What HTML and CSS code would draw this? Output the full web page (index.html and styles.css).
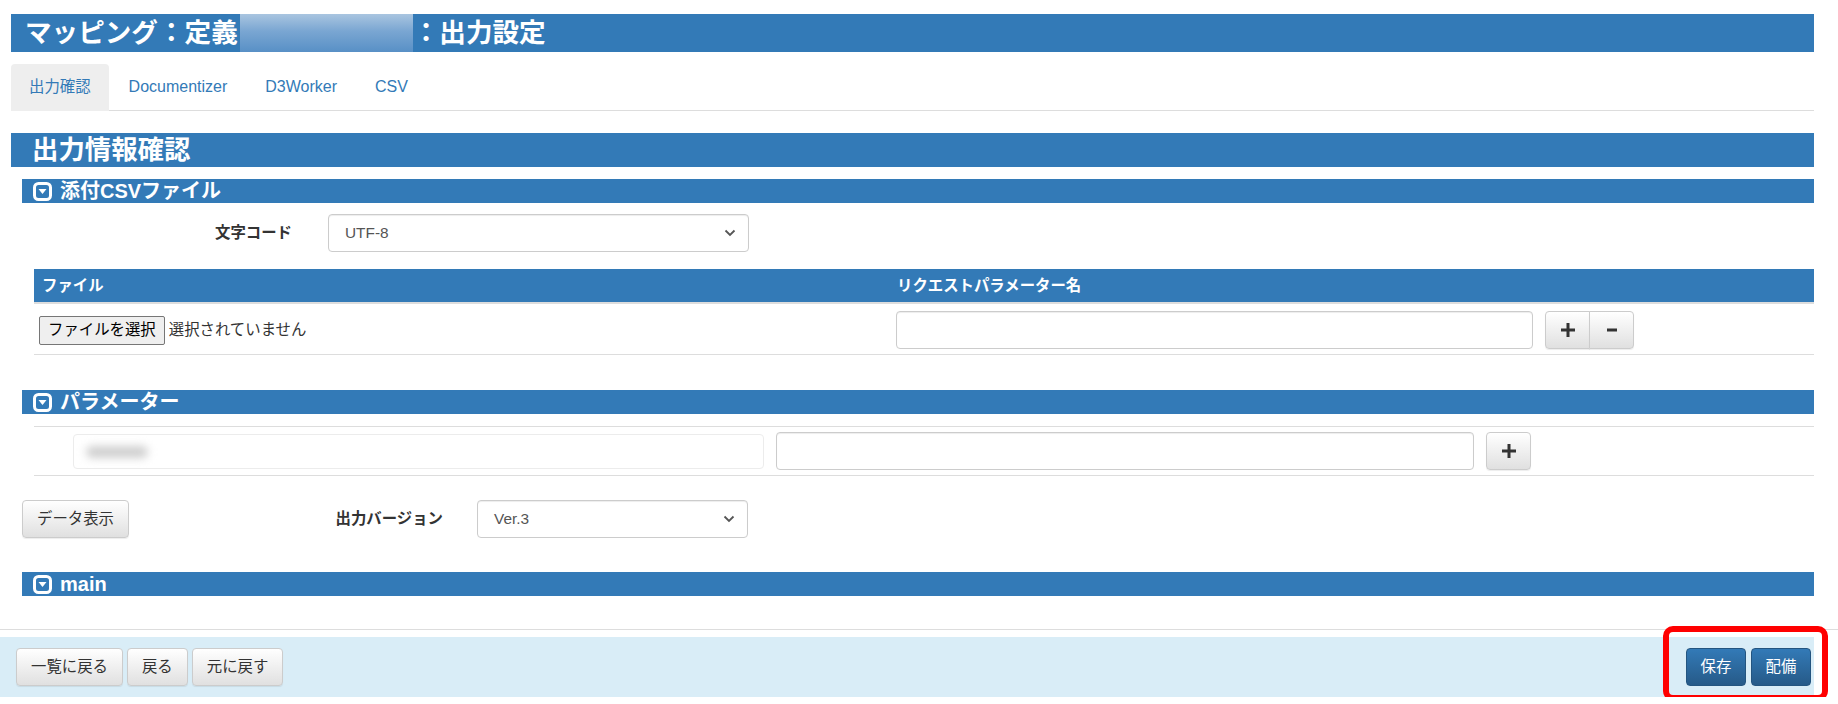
FILE: index.html
```html
<!DOCTYPE html>
<html lang="ja">

<head>
  <meta charset="UTF-8" />
  <title>マッピング：出力設定</title>
  <link rel="stylesheet" href="styles.css">
</head>

<body>
  <div class="page">
    <h1 class="title-bar">マッピング：定義<span class="masked"></span>：出力設定</h1>

    <ul class="nav-tabs">
      <li class="active"><a href="#">出力確認</a></li>
      <li><a href="#">Documentizer</a></li>
      <li><a href="#">D3Worker</a></li>
      <li><a href="#">CSV</a></li>
    </ul>

    <h2 class="section-bar">出力情報確認</h2>

    <div class="section-body">
      <h3 class="sub-bar">
        <svg class="toggle-icon" viewBox="0 0 19 19">
          <rect x="1.5" y="1.5" width="16" height="16" rx="4" fill="none" stroke="#fff" stroke-width="3" />
          <polygon points="5.5,7 13.5,7 9.5,12" fill="#fff" />
        </svg>
        添付CSVファイル
      </h3>

      <div class="form-row">
        <label class="form-label label-charset">文字コード</label>
        <div class="select-box select-charset">
          <span>UTF-8</span>
          <svg class="chevron" viewBox="0 0 12 8">
            <path d="M1.5 1.5 L6 6 L10.5 1.5" fill="none" stroke="#555" stroke-width="1.8" />
          </svg>
        </div>
      </div>

      <table class="grid-table">
        <thead>
          <tr>
            <th class="col-file">ファイル</th>
            <th>リクエストパラメーター名</th>
          </tr>
        </thead>
        <tbody>
          <tr>
            <td><button class="file-btn">ファイルを選択</button><span class="file-name">選択されていません</span></td>
            <td>
              <div class="param-cell">
                <input class="form-control input-request" type="text">
                <div class="btn-group">
                  <button class="btn btn-default btn-icon">
                    <svg viewBox="0 0 14 14"><path d="M5.5 0h3v5.5H14v3H8.5V14h-3V8.5H0v-3h5.5z" fill="#333" /></svg>
                  </button>
                  <button class="btn btn-default btn-icon">
                    <svg viewBox="0 0 14 14"><rect x="2" y="5.5" width="10" height="3" fill="#333" /></svg>
                  </button>
                </div>
              </div>
            </td>
          </tr>
        </tbody>
      </table>

      <h3 class="sub-bar sub-bar-param">
        <svg class="toggle-icon" viewBox="0 0 19 19">
          <rect x="1.5" y="1.5" width="16" height="16" rx="4" fill="none" stroke="#fff" stroke-width="3" />
          <polygon points="5.5,7 13.5,7 9.5,12" fill="#fff" />
        </svg>
        パラメーター
      </h3>

      <div class="param-row">
        <div class="readonly-box"><span class="masked-text"></span></div>
        <input class="form-control input-param" type="text">
        <button class="btn btn-default btn-icon">
          <svg viewBox="0 0 14 14"><path d="M5.5 0h3v5.5H14v3H8.5V14h-3V8.5H0v-3h5.5z" fill="#333" /></svg>
        </button>
      </div>

      <div class="form-row version-row">
        <button class="btn btn-default">データ表示</button>
        <label class="form-label label-version">出力バージョン</label>
        <div class="select-box select-version">
          <span>Ver.3</span>
          <svg class="chevron" viewBox="0 0 12 8">
            <path d="M1.5 1.5 L6 6 L10.5 1.5" fill="none" stroke="#555" stroke-width="1.8" />
          </svg>
        </div>
      </div>

      <h3 class="sub-bar sub-bar-main">
        <svg class="toggle-icon" viewBox="0 0 19 19">
          <rect x="1.5" y="1.5" width="16" height="16" rx="4" fill="none" stroke="#fff" stroke-width="3" />
          <polygon points="5.5,7 13.5,7 9.5,12" fill="#fff" />
        </svg>
        main
      </h3>
    </div>
  </div>

  <hr class="page-divider">

  <div class="action-bar">
    <div class="btn-row">
      <button class="btn btn-default">一覧に戻る</button>
      <button class="btn btn-default">戻る</button>
      <button class="btn btn-default">元に戻す</button>
    </div>
    <div class="btn-row btn-row-right">
      <button class="btn btn-primary">保存</button>
      <button class="btn btn-primary">配備</button>
      <span class="highlight"></span>
    </div>
  </div>
</body>

</html>
```

FILE: styles.css
```css
:root {
  --primary: #337ab7;
  --primary-dark: #265a88;
  --text: #333333;
  --border: #dddddd;
  --input-border: #cccccc;
  --info-bg: #d9edf7;
}

* {
  box-sizing: border-box;
}

body {
  margin: 0;
  font-family: "Liberation Sans", "Noto Sans CJK JP", sans-serif;
  font-size: 15.4px;
  line-height: 22px;
  color: var(--text);
  background: #ffffff;
}

.page {
  padding: 14px 24px 0 11px;
}

/* 見出し */
.title-bar {
  margin: 0;
  height: 38px;
  padding-left: 14px;
  background: var(--primary);
  color: #ffffff;
  font-size: 26.6px;
  font-weight: bold;
  line-height: 38px;
  white-space: nowrap;
}

.masked {
  display: inline-block;
  width: 173px;
  height: 38px;
  vertical-align: top;
  margin-left: 2px;
  background: linear-gradient(180deg, #a9c5e0 0%, #7aa6d2 45%, #5890c6 100%);
}

.nav-tabs {
  display: flex;
  list-style: none;
  margin: 12px 0 0;
  padding: 0;
  border-bottom: 1px solid var(--border);
}

.nav-tabs li {
  margin-right: 2px;
  margin-bottom: -1px;
}

.nav-tabs a {
  display: block;
  padding: 12px 18px;
  font-size: 16px;
  line-height: 22px;
  color: var(--primary);
  text-decoration: none;
  border-radius: 4px 4px 0 0;
}

.nav-tabs .active a {
  font-size: 15.4px;
  background: #eeeeee;
  border-bottom: 1px solid #eeeeee;
}

.section-bar {
  margin: 22px 0 0;
  height: 34px;
  padding-left: 21px;
  background: var(--primary);
  color: #ffffff;
  font-size: 26.4px;
  font-weight: bold;
  line-height: 34px;
}

.section-body {
  margin-left: 11px;
}

.sub-bar {
  display: flex;
  align-items: center;
  margin: 12px 0 0;
  height: 24px;
  padding-left: 11px;
  background: var(--primary);
  color: #ffffff;
  font-size: 20px;
  font-weight: bold;
  line-height: 24px;
}

.sub-bar-param {
  margin-top: 35px;
}

.sub-bar-main {
  margin-top: 34px;
}

.toggle-icon {
  width: 19px;
  height: 19px;
  margin-right: 8px;
}

/* フォーム */
.form-row {
  display: flex;
  align-items: center;
  margin-top: 11px;
}

.form-label {
  font-weight: bold;
  text-align: right;
}

.label-charset {
  width: 270px;
  margin-right: 36px;
}

.select-box {
  display: flex;
  align-items: center;
  justify-content: space-between;
  height: 38px;
  padding: 0 12px 0 16px;
  border: 1px solid var(--input-border);
  border-radius: 4px;
  background: #ffffff;
  color: #555555;
  box-shadow: inset 0 1px 1px rgba(0, 0, 0, 0.075);
}

.select-charset {
  width: 421px;
}

.select-version {
  width: 271px;
}

.chevron {
  width: 12px;
  height: 8px;
}

.version-row {
  margin-top: 24px;
}

.label-version {
  width: 314px;
  margin-right: 34px;
}

.form-control {
  height: 38px;
  padding: 6px 13px;
  border: 1px solid var(--input-border);
  border-radius: 4px;
  background: #ffffff;
  font: inherit;
  color: #555555;
  box-shadow: inset 0 1px 1px rgba(0, 0, 0, 0.075);
}

/* テーブル */
.grid-table {
  width: calc(100% - 12px);
  margin: 17px 0 0 12px;
  border-collapse: collapse;
}

.grid-table th {
  height: 34px;
  padding: 0 8px;
  background: var(--primary);
  color: #ffffff;
  text-align: left;
  font-weight: bold;
  border-bottom: 2px solid var(--border);
}

.grid-table .col-file {
  width: 855px;
}

.grid-table td {
  padding: 7px 5px 5px 5px;
  border-bottom: 1px solid var(--border);
  vertical-align: middle;
}

.grid-table td:last-child {
  padding-left: 7px;
}

.file-btn {
  height: 29px;
  padding: 0 8px;
  border: 1px solid #767676;
  border-radius: 2px;
  background: #efefef;
  font: inherit;
  color: #000000;
}

.file-name {
  margin-left: 4px;
}

.param-cell {
  display: flex;
  align-items: center;
}

.input-request {
  width: 637px;
  margin-right: 12px;
}

.btn-group {
  display: flex;
}

.btn-group .btn:first-child {
  border-radius: 4px 0 0 4px;
}

.btn-group .btn:last-child {
  margin-left: -1px;
  border-radius: 0 4px 4px 0;
}

/* パラメーター行 */
.param-row {
  display: flex;
  align-items: center;
  margin: 12px 0 0 12px;
  padding: 5px 0 5px 39px;
  border-top: 1px solid var(--border);
  border-bottom: 1px solid var(--border);
}

.readonly-box {
  width: 691px;
  height: 35px;
  padding: 11px 12px;
  border: 1px solid #ececec;
  border-radius: 4px;
  margin-right: 12px;
}

.masked-text {
  display: block;
  width: 62px;
  height: 12px;
  background: #cfcfcf;
  border-radius: 6px;
  filter: blur(4px);
}

.input-param {
  width: 698px;
  margin-right: 12px;
}

/* ボタン */
.btn {
  height: 38px;
  padding: 0 14px;
  border: 1px solid var(--input-border);
  border-radius: 4px;
  font: inherit;
  line-height: 22px;
  cursor: pointer;
}

.btn-default {
  color: var(--text);
  background: linear-gradient(180deg, #ffffff 0%, #e0e0e0 100%);
  box-shadow: inset 0 1px 0 rgba(255, 255, 255, 0.15), 0 1px 1px rgba(0, 0, 0, 0.075);
}

.btn-primary {
  width: 60px;
  padding: 0;
  color: #ffffff;
  border-color: #245580;
  background: linear-gradient(180deg, var(--primary) 0%, var(--primary-dark) 100%);
}

.btn-icon {
  width: 45px;
  padding: 0;
  display: inline-flex;
  align-items: center;
  justify-content: center;
}

.btn-icon svg {
  width: 14px;
  height: 14px;
}

/* 下部 */
.page-divider {
  margin: 33px 0 0;
  border: 0;
  border-top: 1px solid var(--border);
}

.action-bar {
  display: flex;
  justify-content: space-between;
  align-items: center;
  margin: 7px 24px 0 0;
  padding: 11px 3px 11px 16px;
  background: var(--info-bg);
}

.btn-row {
  display: flex;
  gap: 5px;
}

.btn-row:first-child {
  gap: 4px;
}

.btn-row-right {
  position: relative;
}

.highlight {
  position: absolute;
  top: -22px;
  left: -23px;
  width: 165px;
  height: 75px;
  border: 6px solid #ff0000;
  border-radius: 10px;
}
```
